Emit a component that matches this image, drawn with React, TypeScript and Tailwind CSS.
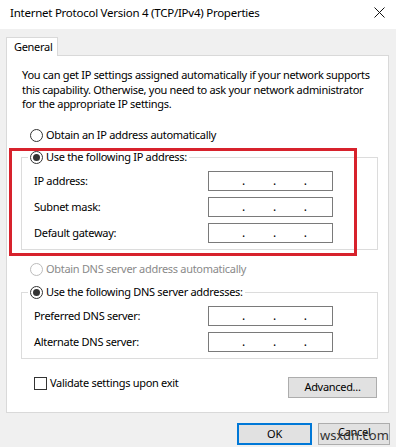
const font = "font-['Noto_Sans',sans-serif]";

function Radio({ checked = false, disabled = false }: { checked?: boolean; disabled?: boolean }) {
  return (
    <span
      className={`flex items-center justify-center w-[13px] h-[13px] rounded-full border bg-white shrink-0 ${
        disabled ? "border-[#bcbcbc]" : "border-[#333333]"
      }`}
    >
      {checked && <span className="w-[7px] h-[7px] rounded-full bg-[#333333]" />}
    </span>
  );
}

function IpBox() {
  return (
    <div className="w-[125px] h-[20px] border border-[#7a7a7a] bg-white flex items-end pb-[3px] pl-[33px] gap-[28px] text-[12px] leading-[12px]">
      <span>.</span>
      <span>.</span>
      <span>.</span>
    </div>
  );
}

function Row({ label }: { label: string }) {
  return (
    <div className="flex items-center h-[20px] pl-[12px]">
      <span className="w-[174px]">{label}</span>
      <IpBox />
    </div>
  );
}

function Group({ legend, rows }: { legend: string; rows: string[] }) {
  return (
    <fieldset className="ml-[14px] w-[357px] border border-[#dcdcdc]">
      <legend className="ml-[6px] pl-[2px] pr-[2px] h-[16px]">
        <span className="flex items-center gap-[3px] h-[16px]">
          <Radio checked />
          <span>{legend}</span>
        </span>
      </legend>
      <div className="flex flex-col gap-[6px] mt-[6px] pb-[6px]">
        {rows.map((r) => (
          <Row key={r} label={r} />
        ))}
      </div>
    </fieldset>
  );
}

export default function App() {
  return (
    <div className={`${font} relative w-[396px] h-[447px] overflow-hidden bg-[#f0f0f0] text-black text-[11px] tracking-[-0.3px]`}>
      {/* title bar */}
      <div className="h-[29px] bg-white flex items-center justify-between pl-[10px] pr-[11px] pb-[4px]">
        <span className="text-[11.5px] tracking-[-0.25px] text-black">Internet Protocol Version 4 (TCP/IPv4) Properties</span>
        <svg width="11" height="11" viewBox="0 0 11 11">
          <path d="M0.5 0.5 L10.5 10.5 M10.5 0.5 L0.5 10.5" stroke="#111" strokeWidth="1" />
        </svg>
      </div>

      {/* tab */}
      <div className="pt-[8px] pl-[6px] flex">
        <div className="relative z-10 -mb-px w-[52px] h-[19px] bg-white border border-b-0 border-[#d9d9d9] flex items-center pl-[7px]">
          General
        </div>
      </div>

      {/* panel */}
      <div className="relative ml-[6px] w-[383px] h-[358px] bg-white border border-[#d9d9d9]">
        <p className="mt-[12px] ml-[15px] h-[44px] leading-[14.5px] whitespace-nowrap">
          You can get IP settings assigned automatically if your network supports
          <br />
          this capability. Otherwise, you need to ask your network administrator
          <br />
          for the appropriate IP settings.
        </p>

        <div className="mt-[15px] ml-[23px] h-[16px] flex items-center gap-[3px]">
          <Radio />
          <span>Obtain an IP address automatically</span>
        </div>

        <div className="mt-[6px]">
          <Group legend="Use the following IP address:" rows={["IP address:", "Subnet mask:", "Default gateway:"]} />
        </div>

        <div className="mt-[11px] ml-[23px] h-[16px] flex items-center gap-[3px] text-[#8a8a8a]">
          <Radio disabled />
          <span>Obtain DNS server address automatically</span>
        </div>

        <div className="mt-[7px]">
          <Group legend="Use the following DNS server addresses:" rows={["Preferred DNS server:", "Alternate DNS server:"]} />
        </div>

        <div className="mt-[18px] flex items-start justify-between">
          <div className="ml-[27px] h-[13px] flex items-center gap-[3px]">
            <span className="w-[13px] h-[13px] border border-[#333333] bg-white" />
            <span>Validate settings upon exit</span>
          </div>
          <button className="mr-[11px] w-[89px] h-[21px] bg-[#e1e1e1] border border-[#adadad] text-[11px]">
            Advanced...
          </button>
        </div>

        {/* highlight annotation */}
        <div className="absolute left-[2px] top-[92px] w-[348px] h-[108px] border-[3px] border-[#d7222c] pointer-events-none" />
      </div>

      {/* dialog buttons */}
      <div className="mt-[10px] flex justify-end gap-[6px] pr-[6px]">
        <button className="w-[75px] h-[22px] bg-[#e1e1e1] border-2 border-[#0078d7] text-[11px]">OK</button>
        <button className="relative w-[72px] h-[22px] bg-[#e1e1e1] border border-[#adadad] text-[11px]">
          <span className="absolute left-[19px] top-[1px] leading-[14px]">Cancel</span>
          <span className="absolute left-[1px] top-[3px] text-[13px] text-[#333] leading-[16px] tracking-normal">wsxdn.com</span>
        </button>
      </div>
    </div>
  );
}
